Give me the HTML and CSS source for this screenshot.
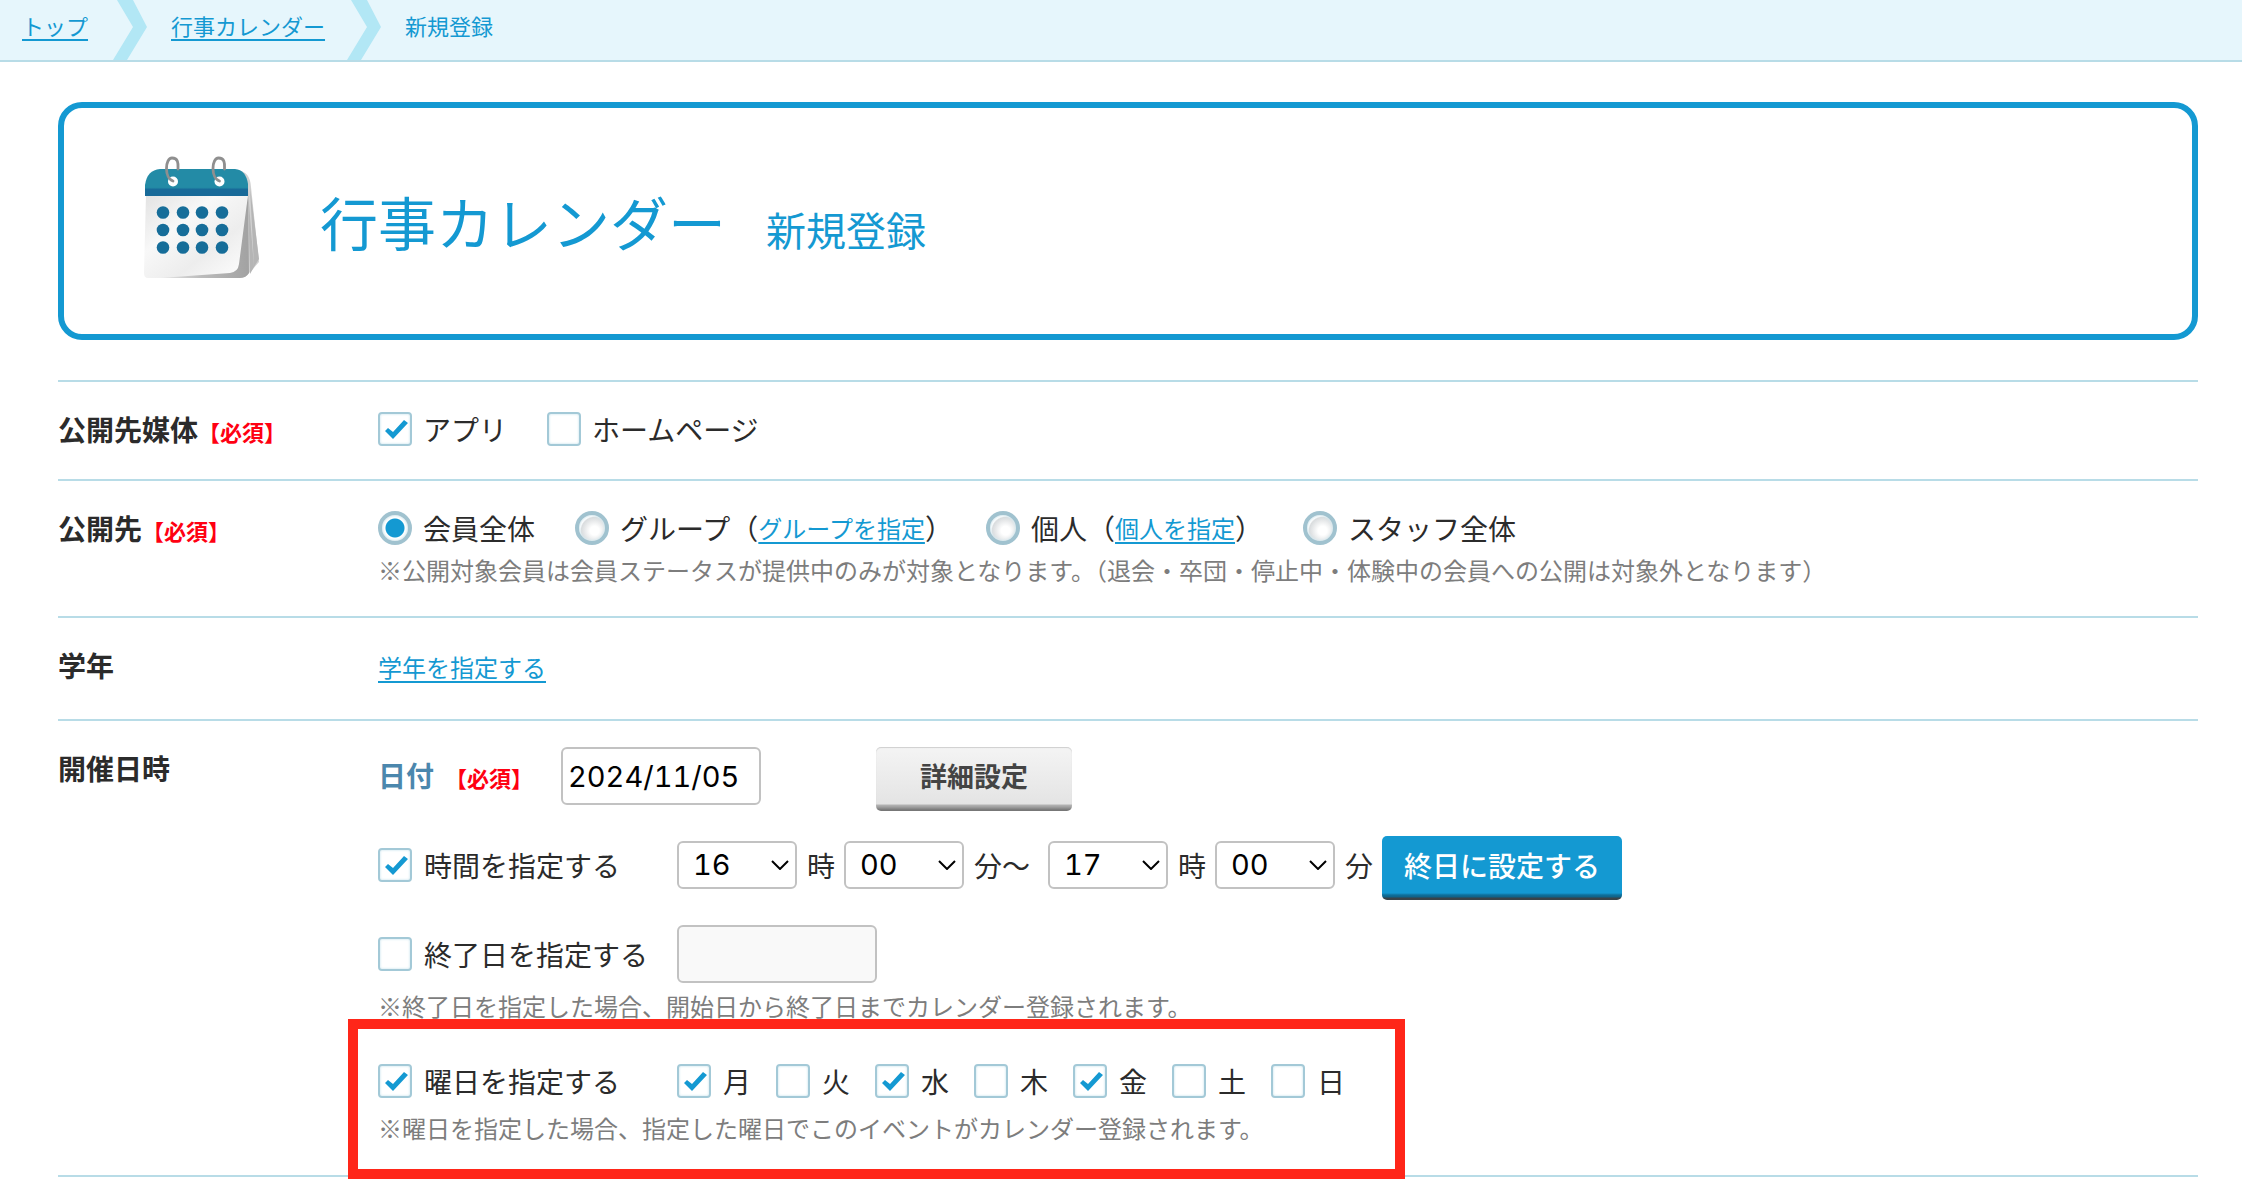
FILE: index.html
```html
<!DOCTYPE html>
<html lang="ja">
<head>
<meta charset="utf-8">
<title>行事カレンダー 新規登録</title>
<link rel="stylesheet" href="styles.css">
</head>
<body>
<nav class="breadcrumb" aria-label="パンくずリスト">
  <a class="crumb crumb-top" href="#">トップ</a>
  <svg class="crumb-arrow" viewBox="0 0 34 60" aria-hidden="true"><path d="M4 0H20L34 27L14 60H0L20 27Z"/></svg>
  <a class="crumb crumb-parent" href="#">行事カレンダー</a>
  <svg class="crumb-arrow" viewBox="0 0 34 60" aria-hidden="true"><path d="M4 0H20L34 27L14 60H0L20 27Z"/></svg>
  <span class="crumb-current">新規登録</span>
</nav>
<main class="page">
  <header class="title-box">
    <svg class="title-icon" viewBox="0 0 140 145" aria-hidden="true">
      <defs>
        <linearGradient id="paper" x1="0" y1="0" x2="1" y2="1"><stop offset="0" stop-color="#e2e2e2"/><stop offset=".35" stop-color="#f8f8f8"/><stop offset=".65" stop-color="#ededed"/><stop offset="1" stop-color="#fff"/></linearGradient>
        <linearGradient id="band" x1="0" y1="0" x2="0" y2="1"><stop offset="0" stop-color="#238ba6"/><stop offset=".68" stop-color="#238ba6"/><stop offset=".76" stop-color="#186a99"/><stop offset="1" stop-color="#186a99"/></linearGradient>
        <linearGradient id="curl" x1="0" y1="0" x2="1" y2="0"><stop offset="0" stop-color="#eee"/><stop offset=".5" stop-color="#bbb"/><stop offset="1" stop-color="#a2a2a2"/></linearGradient>
      </defs>
      <path d="M108 26q12 0 13 16L129 117l-6 7-8 8H30z" fill="#d2d2d2"/>
      <path d="M120 42l9 72-5 8zM118 46l6 76-4 7z" fill="#b5b5b5"/>
      <path d="M118 50l1 78q-3 5-9 5H24l80-8z" fill="url(#curl)"/>
      <path d="M16 50H118L109 119q-1 8-9 9L30 133H18q-4 0-4-5z" fill="url(#paper)"/>
      <path d="M15 50V40Q17 25 30 24H105Q116 25 118 39V51H15z" fill="url(#band)"/>
      <g fill="#166d99">
        <circle cx="33" cy="67.500" r="6.300"/><circle cx="53" cy="67.500" r="6.300"/><circle cx="72" cy="67.500" r="6.300"/><circle cx="92" cy="67.500" r="6.300"/>
        <circle cx="33" cy="85" r="6.300"/><circle cx="53" cy="85" r="6.300"/><circle cx="72" cy="85" r="6.300"/><circle cx="92" cy="85" r="6.300"/>
        <circle cx="33" cy="102.500" r="6.300"/><circle cx="53" cy="102.500" r="6.300"/><circle cx="72" cy="102.500" r="6.300"/><circle cx="92" cy="102.500" r="6.300"/>
      </g>
      <g fill="#fff"><circle cx="43" cy="36.500" r="5"/><circle cx="89.500" cy="36.500" r="5"/></g>
      <g fill="none" stroke="#8f8f8f" stroke-width="2.800" stroke-linecap="round">
        <path d="M43 36C34 33 35 13 42 13S48 20 48 24"/>
        <path d="M89.500 36C80.500 33 81.500 13 88.500 13S94.500 20 94.500 24"/>
      </g>
    </svg>
    <h1 class="title">行事カレンダー</h1>
    <p class="subtitle">新規登録</p>
  </header>

  <form class="form">
    <section class="row row-media">
      <h2 class="row-label">公開先媒体<em class="required">【必須】</em></h2>
      <div class="row-body">
        <div class="line choices">
          <label class="choice"><input type="checkbox" checked>アプリ</label>
          <label class="choice"><input type="checkbox">ホームページ</label>
        </div>
      </div>
    </section>

    <section class="row row-target">
      <h2 class="row-label">公開先<em class="required">【必須】</em></h2>
      <div class="row-body">
        <div class="targets">
          <div class="line"><label class="choice"><input type="radio" name="target" checked>会員全体</label></div>
          <div class="line"><label class="choice"><input type="radio" name="target">グループ（</label><a class="link" href="#">グループを指定</a>）</div>
          <div class="line"><label class="choice"><input type="radio" name="target">個人（</label><a class="link" href="#">個人を指定</a>）</div>
          <div class="line"><label class="choice"><input type="radio" name="target">スタッフ全体</label></div>
        </div>
        <p class="note target-note">※公開対象会員は会員ステータスが提供中のみが対象となります。（退会・卒団・停止中・体験中の会員への公開は対象外となります）</p>
      </div>
    </section>

    <section class="row row-grade">
      <h2 class="row-label">学年</h2>
      <div class="row-body"><div class="line"><a class="link" href="#">学年を指定する</a></div></div>
    </section>

    <section class="row row-schedule">
      <h2 class="row-label">開催日時</h2>
      <div class="row-body schedule">
        <div class="field date-field">
          <label class="date-label" for="date">日付<em class="required">【必須】</em></label>
          <input class="text-input" id="date" type="text" value="2024/11/05">
          <button class="btn btn-gray" type="button">詳細設定</button>
        </div>
        <div class="field time-field">
          <label class="choice lead"><input type="checkbox" checked>時間を指定する</label>
          <div class="times">
            <select class="select" id="sh" aria-label="開始時"><option>16</option></select>
            <label class="unit" for="sh">時</label>
            <select class="select" id="sm" aria-label="開始分"><option>00</option></select>
            <label class="unit unit-range" for="sm">分〜</label>
            <select class="select" id="eh" aria-label="終了時"><option>17</option></select>
            <label class="unit" for="eh">時</label>
            <select class="select" id="em" aria-label="終了分"><option>00</option></select>
            <label class="unit" for="em">分</label>
            <button class="btn btn-blue" type="button">終日に設定する</button>
          </div>
        </div>
        <div class="field end-field">
          <label class="choice lead"><input type="checkbox">終了日を指定する</label>
          <input class="text-input" type="text" aria-label="終了日" disabled>
        </div>
        <p class="note">※終了日を指定した場合、開始日から終了日までカレンダー登録されます。</p>
        <div class="weekday-block">
          <div class="field">
            <label class="choice lead"><input type="checkbox" checked>曜日を指定する</label>
            <div class="weekdays">
              <label class="choice"><input type="checkbox" checked>月</label>
              <label class="choice"><input type="checkbox">火</label>
              <label class="choice"><input type="checkbox" checked>水</label>
              <label class="choice"><input type="checkbox">木</label>
              <label class="choice"><input type="checkbox" checked>金</label>
              <label class="choice"><input type="checkbox">土</label>
              <label class="choice"><input type="checkbox">日</label>
            </div>
          </div>
          <p class="note weekday-note">※曜日を指定した場合、指定した曜日でこのイベントがカレンダー登録されます。</p>
        </div>
      </div>
    </section>
  </form>
</main>
</body>
</html>
```
FILE: styles.css
```css
:root {
  --blue: #1499d2;
  --line: #b8dce7;
  --ink: #2b2b2b;
}

*, *::after { box-sizing: border-box; }

body {
  margin: 0;
  background: #fff;
  color: var(--ink);
  font-family: "Noto Sans CJK JP", sans-serif;
  font-size: 28px;
  line-height: 34px;
}

h1, h2, p { margin: 0; font-weight: 400; }
em { font-style: normal; }

/* Breadcrumb */
.breadcrumb {
  display: flex;
  align-items: flex-start;
  height: 62px;
  padding-left: 22px;
  background: #e6f6fc;
  border-bottom: 2px solid var(--line);
  color: var(--blue);
  font-size: 22px;
  line-height: 32px;
}
.crumb, .crumb-current { padding-top: 9px; }
.crumb {
  color: var(--blue);
  text-decoration-thickness: 2px;
  text-underline-offset: 4px;
}
.crumb-top { margin-right: 25px; }
.crumb-parent { margin: 0 22px 0 24px; }
.crumb-current { margin-left: 24px; }
.crumb-arrow { width: 34px; height: 60px; fill: #b2e7f5; }

/* Page heading */
.page { padding: 40px 44px 16px 58px; }
.title-box {
  display: flex;
  align-items: baseline;
  height: 238px;
  border: 6px solid var(--blue);
  border-radius: 24px;
  color: var(--blue);
}
.title-icon {
  align-self: flex-start;
  width: 140px;
  height: 145px;
  margin: 37px 50px 0 66px;
}
.title { margin-right: 40px; padding-top: 73px; font-size: 58px; line-height: 80px; }
.subtitle { font-size: 40px; line-height: 60px; }

/* Form rows */
.form { margin-top: 40px; }
.row {
  display: grid;
  grid-template-columns: 320px 1fr;
  border-top: 2px solid var(--line);
}
.row-label {
  padding-top: 30px;
  font-size: 28px;
  font-weight: 700;
}
.row-body { padding-top: 30px; }
.required { color: #ff0012; font-size: 22px; font-weight: 700; }
.row-media .row-body { padding-bottom: 33px; }
.row-target .row-body { padding-bottom: 31px; }
.row-grade .row-body { padding: 32px 0 35px; }
.row-schedule { border-bottom: 2px solid var(--line); }
.row-schedule .row-body { padding: 26px 0 32px; }

.line, .choice { display: flex; align-items: center; white-space: nowrap; }
.choice { gap: 11px; }
.choices { gap: 40px; }
.targets { display: grid; grid-template-columns: 197px 411px 317px auto; justify-content: start; }
.link {
  color: var(--blue);
  font-size: 24px;
  text-decoration-thickness: 2px;
  text-underline-offset: 4px;
}
.note { color: #7d7d7d; font-size: 24px; line-height: 30px; }
.target-note { margin-top: 10px; }

/* Tick boxes and radios */
input[type="checkbox"], input[type="radio"] {
  appearance: none;
  flex: none;
  width: 34px;
  height: 34px;
  margin: 0;
  background: #fff;
}
input[type="checkbox"] {
  border: 2px solid #a3c9d7;
  border-radius: 4px;
  box-shadow: inset 0 0 2px 1px #e2f1f6;
}
input[type="checkbox"]:checked {
  background: #fff url("data:image/svg+xml,%3Csvg xmlns='http://www.w3.org/2000/svg' viewBox='0 0 30 30'%3E%3Cpath d='M5 17l3-3 5 4 11-12 4 3-15 16z' fill='%231499d2'/%3E%3C/svg%3E") center / 30px 30px;
}
input[type="radio"] {
  border: 4px solid #a0c2cf;
  border-radius: 50%;
  background: radial-gradient(circle at 60% 60%, #fff 20%, #d9dcde 60%, #fff 66%);
  box-shadow: inset 0 0 2px 1px #d8eaf0;
}
input[type="radio"]:checked { background: radial-gradient(circle, var(--blue) 9px, #fff 10px); }

/* Schedule fields */
.schedule { display: flex; flex-direction: column; align-items: flex-start; }
.schedule .choice { gap: 12px; }
.field { display: flex; align-items: center; }
.lead { width: 299px; }
.date-field { align-items: flex-start; }
.date-label {
  width: 183px;
  padding-top: 11px;
  color: #4b87ad;
  font-weight: 700;
  white-space: nowrap;
}
.date-label .required { margin-left: 11px; }
.text-input {
  width: 200px;
  height: 58px;
  padding: 0 5px;
  border: 2px solid #c2c2c2;
  border-radius: 6px;
  background: #fff;
  color: #000;
  font: 29px/34px Inter, sans-serif;
  font-variant-numeric: tabular-nums;
}
.text-input:disabled { background: #f9f9f9; }
.btn {
  height: 64px;
  padding: 0 0 6px;
  border: 0;
  border-radius: 5px;
  font-family: inherit;
  font-size: 27px;
  font-weight: 700;
  line-height: 34px;
}
.btn-gray {
  width: 196px;
  margin-left: 115px;
  background: linear-gradient(#f4f4f4, #e4e4e4 57px, #b4b4b4 58px, #a0a0a0 60px, #777 63px);
  box-shadow: inset 0 1px 1px #cfcfcf;
  color: #444;
}
.btn-blue {
  width: 240px;
  margin-top: 6px;
  background: linear-gradient(#1499d2 57px, #0f6f99 59px, #0f6288 61px, #3a4348 62px);
  color: #fff;
  font-size: 28px;
  font-weight: 500;
}
.time-field { margin-top: 19px; }
.times { display: flex; align-items: center; }
.select {
  appearance: none;
  width: 120px;
  height: 48px;
  padding: 0 14px;
  border: 2px solid #c2c2c2;
  border-radius: 6px;
  background: #fff url("data:image/svg+xml,%3Csvg xmlns='http://www.w3.org/2000/svg' viewBox='0 0 18 10'%3E%3Cpath d='M1 1l8 8 8-8' fill='none' stroke='%23000' stroke-width='2'/%3E%3C/svg%3E") no-repeat right 6px center / 18px 10px;
  color: #000;
  font: 29px/34px Inter, sans-serif;
  font-variant-numeric: tabular-nums;
}
.unit { margin: 0 9px 0 10px; }
.unit-range { margin-right: 18px; }
.end-field { margin-top: 25px; }
.end-field + .note { margin-top: 8px; }
.weekday-block { position: relative; margin-top: 43px; }
.weekdays { display: flex; gap: 25px; }
.weekday-note { margin-top: 15px; }

/* Highlight frame over the weekday fields */
.weekday-block::after {
  content: "";
  position: absolute;
  top: -45px;
  left: -30px;
  width: 1057px;
  height: 160px;
  border: 10px solid #ff2619;
  pointer-events: none;
}
```
